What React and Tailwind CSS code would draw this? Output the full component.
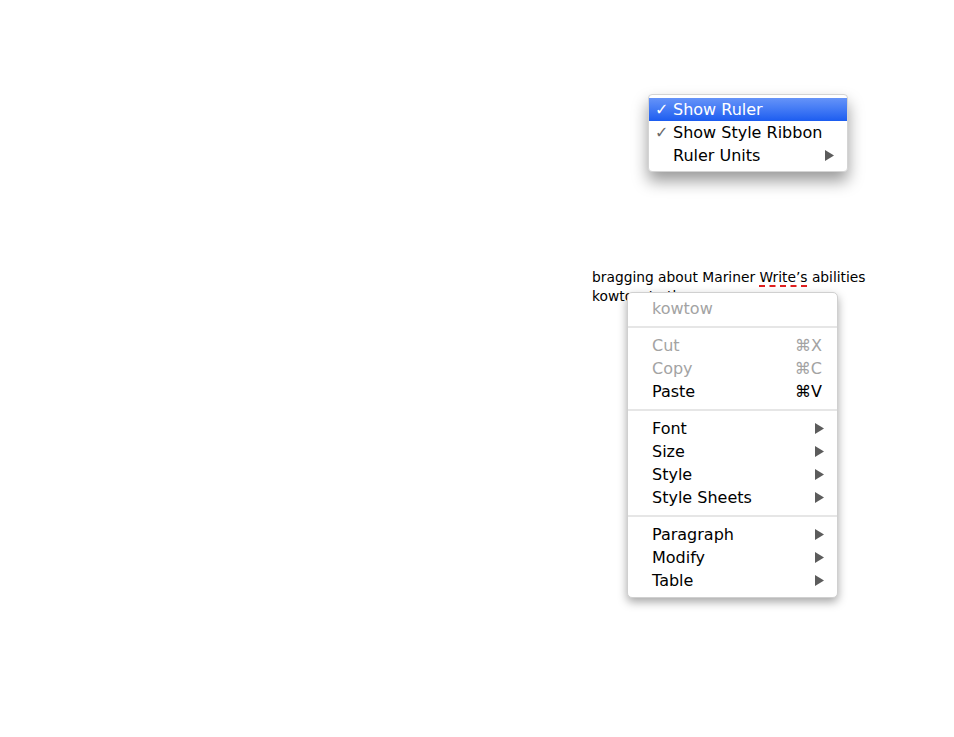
const font = { fontFamily: '"DejaVu Sans", "Liberation Sans", sans-serif' };

const viewItems = [
  { label: "Show Ruler", checked: true, active: true },
  { label: "Show Style Ribbon", checked: true },
  { label: "Ruler Units", submenu: true },
];

const contextGroups = [
  [
    { label: "Cut", shortcut: "⌘X", disabled: true },
    { label: "Copy", shortcut: "⌘C", disabled: true },
    { label: "Paste", shortcut: "⌘V" },
  ],
  [
    { label: "Font", submenu: true },
    { label: "Size", submenu: true },
    { label: "Style", submenu: true },
    { label: "Style Sheets", submenu: true },
  ],
  [
    { label: "Paragraph", submenu: true },
    { label: "Modify", submenu: true },
    { label: "Table", submenu: true },
  ],
];

function Arrow({ className }) {
  return (
    <svg width="9" height="11" viewBox="0 0 9 11" className={className}>
      <polygon points="0,0 9,5.5 0,11" fill="currentColor" />
    </svg>
  );
}

function Separator() {
  return (
    <div className="flex h-[14px] items-center">
      <div className="h-[2px] w-full bg-[#e6e6e6]" />
    </div>
  );
}

export default function App() {
  return (
    <div className="relative h-[737px] w-full overflow-hidden bg-white" style={font}>
      {/* view menu */}
      <div className="absolute left-[648px] top-[94px] w-[200px] rounded-[4px] border border-[#d4d4d4] bg-white pt-[3px] pb-[4px] shadow-[0_9px_16px_rgba(0,0,0,0.4)]">
        {viewItems.map((item) => (
          <div
            key={item.label}
            className={`flex h-[23px] items-center pr-[13px] text-[16px] ${
              item.active ? "bg-gradient-to-b from-[#6593f8] to-[#1b5cf0] text-white" : "text-black"
            }`}
          >
            <span
              className={`w-[24px] pl-[6px] text-[16px] font-bold ${item.active ? "text-white" : "text-[#6a6a6a]"}`}
            >
              {item.checked ? "✓" : ""}
            </span>
            <span className="flex-1">{item.label}</span>
            {item.submenu && <Arrow className="text-[#5c5c5c]" />}
          </div>
        ))}
      </div>

      {/* document text with context menu */}
      <div className="pl-[592px] pt-[268px]">
        <div className="relative w-[300px] text-[13.8px] leading-[19px] text-black">
          <p>
            bragging about Mariner{" "}
            <span className="underline decoration-[#e02020] decoration-dashed decoration-2 underline-offset-[3px]">
              Write’s
            </span>{" "}
            abilities
          </p>
          <p>kowtow to the</p>

          <div className="absolute left-[35px] top-[24px] w-[211px] rounded-[5px] border border-[#d0d0d0] bg-white pt-[4px] pb-[5px] text-[16px] shadow-[0_4px_10px_rgba(0,0,0,0.35)]">
            <div className="flex h-[23px] items-center pl-[24px] text-[#a3a3a3]">kowtow</div>
            {contextGroups.map((group, gi) => (
              <div key={gi}>
                <Separator />
                {group.map((item) => (
                  <div
                    key={item.label}
                    className={`flex h-[23px] items-center pl-[24px] ${
                      item.disabled ? "text-[#a3a3a3]" : "text-black"
                    } ${item.submenu ? "pr-[13px]" : "pr-[15px]"}`}
                  >
                    <span className="flex-1">{item.label}</span>
                    {item.shortcut && <span>{item.shortcut}</span>}
                    {item.submenu && <Arrow className="text-[#5c5c5c]" />}
                  </div>
                ))}
              </div>
            ))}
          </div>
        </div>
      </div>
    </div>
  );
}
